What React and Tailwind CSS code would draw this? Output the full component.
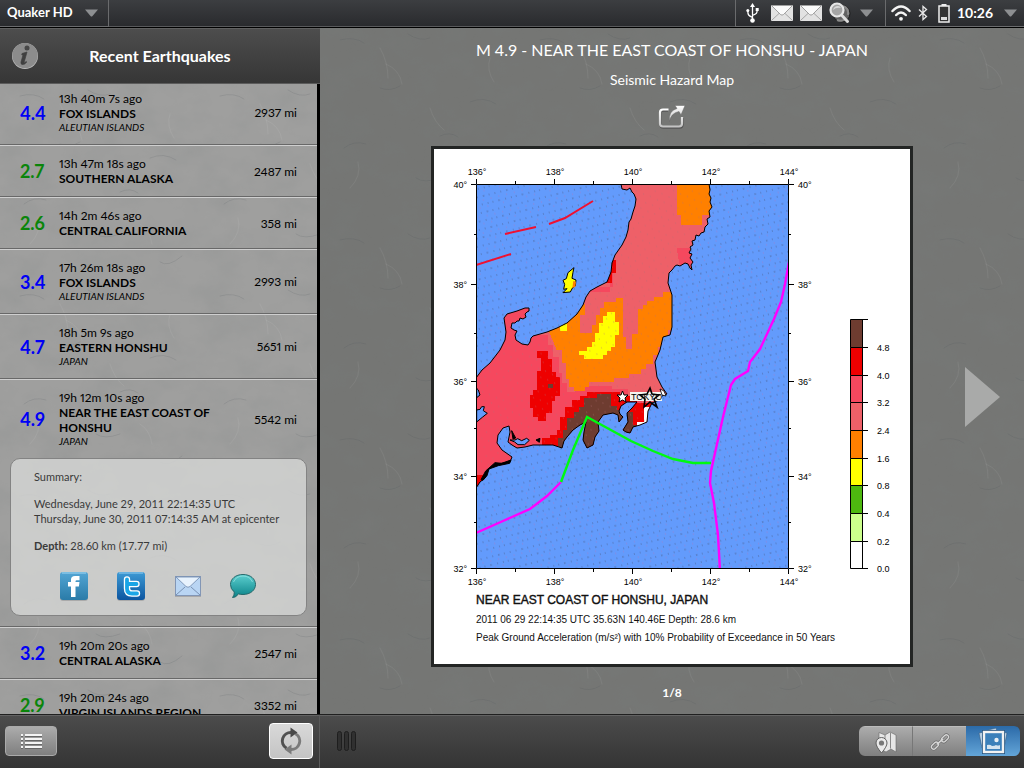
import React from "react";

const QUAKES = [
  { mag: "4.4", strong: true, ago: "13h 40m 7s ago", name: "FOX ISLANDS", region: "ALEUTIAN ISLANDS", dist: "2937 mi" },
  { mag: "2.7", ago: "13h 47m 18s ago", name: "SOUTHERN ALASKA", dist: "2487 mi" },
  { mag: "2.6", ago: "14h 2m 46s ago", name: "CENTRAL CALIFORNIA", dist: "358 mi" },
  { mag: "3.4", strong: true, ago: "17h 26m 18s ago", name: "FOX ISLANDS", region: "ALEUTIAN ISLANDS", dist: "2993 mi" },
  { mag: "4.7", strong: true, ago: "18h 5m 9s ago", name: "EASTERN HONSHU", region: "JAPAN", dist: "5651 mi" },
  { mag: "4.9", strong: true, ago: "19h 12m 10s ago", name: "NEAR THE EAST COAST OF HONSHU", region: "JAPAN", dist: "5542 mi", open: true },
  { mag: "3.2", strong: true, ago: "19h 20m 20s ago", name: "CENTRAL ALASKA", dist: "2547 mi" },
  { mag: "2.9", ago: "19h 20m 24s ago", name: "VIRGIN ISLANDS REGION", dist: "3352 mi" },
];

/* Marble surface that lies behind the list and the map */
function Marble({ id }) {
  return (
    <svg className="absolute inset-0 h-full w-full" aria-hidden="true">
      <defs>
        <filter id={id + "n"} x="0" y="0" width="100%" height="100%">
          <feTurbulence type="fractalNoise" baseFrequency="0.025 0.035" numOctaves="4" seed="7" stitchTiles="stitch" />
          <feColorMatrix values="0 0 0 0 0.2  0 0 0 0 0.22  0 0 0 0 0.22  0.9 0 0 0 -0.35" />
        </filter>
        <pattern id={id + "v"} width="200" height="200" patternUnits="userSpaceOnUse">
          <g fill="none" strokeLinecap="round">
            <path d="M20 12q14-4 24 3M88 6q12 8 22 4M150 74q14-6 26 2M24 120q10-8 22-4M96 150q8 6 24 0M160 178q8 6 22-6M60 60q10 4 20-2M120 108q10-5 18 1" stroke="#3f4a4c" strokeOpacity=".14" />
            <path d="M60 20q8 14 8 30M66 36q14 6 16 20M110 80q4 14 14 22M30 160q12-12 8-26M170 30q-4 12 4 24M140 140q10 6 12 20" stroke="#fff" strokeOpacity=".06" />
          </g>
        </pattern>
      </defs>
      <rect width="100%" height="100%" filter={"url(#" + id + "n)"} opacity=".4" />
      <rect width="100%" height="100%" fill={"url(#" + id + "v)"} />
    </svg>
  );
}

function Caret() {
  return (
    <svg width="13" height="8" viewBox="0 0 13 8" aria-hidden="true">
      <path d="M0 .5h13L7.5 7q-1 1-2 0z" fill="#8d8f91" />
    </svg>
  );
}

function Mail() {
  return (
    <svg width="22" height="16" viewBox="0 0 22 16" role="img" aria-label="New mail">
      <rect width="22" height="16" rx="1" fill="#e2e2e2" />
      <path d="M1 15l7.500-7M21 15l-7.500-7" stroke="#a5a5a5" />
      <path d="M.5.5h21L12.500 9.500q-1.500 1.200-3 0z" fill="#fafafa" stroke="#8b8b8b" strokeWidth=".8" />
    </svg>
  );
}

function StatusBar() {
  return (
    <header className="flex h-7 shrink-0 items-stretch border-b border-black bg-linear-to-b from-[#3c3e41] to-[#292a2d] text-white">
      <button className="flex w-[109px] items-center justify-between border-r border-b border-[#6a6b6d] pr-2.5 pl-[7px] text-[13px] font-bold">
        Quaker HD <Caret />
      </button>
      <div className="flex-1 border-b border-[#58595b]" />
      <div className="flex w-[150px] items-center border-b border-l border-[#6a6b6d] pl-2.5">
        <svg width="13" height="20" viewBox="0 0 13 20" role="img" aria-label="USB">
          <path d="M6.500 3v14M6.500 14.500C2.500 12.500 1.800 12 1.800 8M6.500 12.500c4-1.500 4.700-2 4.700-6" fill="none" stroke="#fff" strokeWidth="1.300" />
          <path d="M6.500 0L9 4H4z" fill="#fff" />
          <circle cx="6.500" cy="17.500" r="2.300" fill="#fff" />
          <circle cx="1.800" cy="7.500" r="1.500" fill="#fff" />
          <path d="M9.700 5h3v3h-3z" fill="#fff" />
        </svg>
        <div className="ml-3 flex gap-[7px]"><Mail /><Mail /></div>
        <svg className="ml-[7px]" width="22" height="22" viewBox="0 0 22 22" role="img" aria-label="Search">
          <circle cx="12.500" cy="11.500" r="8.500" fill="#626262" stroke="#1c1c1c" />
          <path d="M14 4q6 2 5 9M8 18q5 2 8-1" fill="none" stroke="#8a8a8a" strokeWidth="2" />
          <path d="M12.500 13l6 6.500" stroke="#ddd" strokeWidth="3" strokeLinecap="round" />
          <circle cx="8" cy="8" r="6.500" fill="#a5a5a5" stroke="#e6e6e6" strokeWidth="2.200" />
          <path d="M4 8q1-4 5-4 2 0 3 2-5-1-8 2z" fill="#d8d8d8" />
        </svg>
        <span className="ml-[9px]"><Caret /></span>
      </div>
      <button aria-label="System menu" className="flex w-[139px] items-center border-b border-l border-[#6a6b6d] pl-[5px] text-sm font-bold">
        <svg width="20" height="16" viewBox="0 0 20 16" aria-hidden="true">
          <g fill="none" stroke="#f4f4f4" strokeWidth="2.500" strokeLinecap="round">
            <path d="M1.500 6q8.500-9 17 0" /><path d="M5.200 10q4.800-5 9.600 0" />
          </g>
          <circle cx="10" cy="13.800" r="1.900" fill="#f4f4f4" />
        </svg>
        <svg className="ml-[7px]" width="10" height="16" viewBox="0 0 10 16" aria-hidden="true">
          <path d="M1 4.500l7.500 7L5 14.500v-13l3.500 3-7.500 7" fill="none" stroke="#e8e8e8" strokeWidth="1.300" />
        </svg>
        <svg className="ml-2.5" width="12" height="19" viewBox="0 0 12 19" aria-hidden="true">
          <path d="M3.500 0h5v2h-5z" fill="#eee" />
          <rect x="1" y="2" width="10" height="16" fill="#333" stroke="#eee" strokeWidth="1.500" />
          <path d="M3 13h6v3H3z" fill="#ddd" />
        </svg>
        <span className="ml-[7px] flex-1 text-left">10:26</span>
        <span className="mr-[7px]"><Caret /></span>
      </button>
    </header>
  );
}

function Summary() {
  return (
    <section className="relative mx-2.5 mb-2.5 rounded-[10px] border border-[#838383] bg-[#d2d3d2]/85 px-[23px] pt-2.5 pb-3.5 text-[11px] leading-[15px] text-[#3a3a3a]">
      <p>Summary:</p>
      <p className="mt-3">Wednesday, June 29, 2011 22:14:35 UTC</p>
      <p className="whitespace-nowrap">Thursday, June 30, 2011 07:14:35 AM at epicenter</p>
      <p className="mt-3"><b>Depth:</b> 28.60 km (17.77 mi)</p>
      <div className="mt-[18px] flex items-center justify-between pr-[26px] pl-[25px]">
        <button aria-label="Share on Facebook">
          <svg width="30" height="30" viewBox="0 0 30 30">
            <defs><linearGradient id="fb" x2="0" y2="1"><stop stopColor="#53a5d4" /><stop offset="1" stopColor="#2a7ba8" /></linearGradient></defs>
            <rect x="1" y="2" width="28" height="28" rx="3" fill="#aaa" />
            <rect x="1" y="1" width="28" height="28" rx="3" fill="url(#fb)" />
            <path d="M3 2h24" stroke="#a5d8f2" />
            <path d="M12 26V15.500H9V11h3V8.500Q12 5 16 5h4.500v4.300h-2.800q-1.200 0-1.200 1.200v.5h4l-.6 4.500h-3.400V26z" fill="#fff" />
          </svg>
        </button>
        <button aria-label="Share on Twitter">
          <svg width="30" height="30" viewBox="0 0 30 30">
            <defs><linearGradient id="tw" x2="0" y2="1"><stop stopColor="#3d9ad4" /><stop offset="1" stopColor="#0c55a0" /></linearGradient></defs>
            <rect x="1" y="2" width="28" height="28" rx="3" fill="#aaa" />
            <rect x="1" y="1" width="28" height="28" rx="3" fill="url(#tw)" />
            <path d="M3 2h24" stroke="#95cdf0" />
            <path d="M11 8.500v9q0 5 5 5h5M11 13h9.500" fill="none" stroke="#fff" strokeWidth="6.400" strokeLinecap="round" />
            <path d="M11 8.500v9q0 5 5 5h5M11 13h9.500" fill="none" stroke="#1aa5e6" strokeWidth="3.800" strokeLinecap="round" />
          </svg>
        </button>
        <button aria-label="Share by mail">
          <svg width="28" height="22" viewBox="0 0 28 22">
            <path d="M1 21.500h26" stroke="#a9a9a9" />
            <rect x="1.500" y="1.500" width="25" height="19" fill="#b9d5f3" stroke="#8296b5" />
            <path d="M2 20l9-8M26 20l-9-8" stroke="#7992b4" />
            <path d="M2 2h24l-10 9.500q-2 1.500-4 0z" fill="#e7f2fd" stroke="#7992b4" strokeWidth=".9" />
          </svg>
        </button>
        <button aria-label="Share by message">
          <svg width="28" height="26" viewBox="0 0 28 26">
            <defs><linearGradient id="ms" x2="0" y2="1"><stop stopColor="#5ccfcf" /><stop offset="1" stopColor="#0b8288" /></linearGradient></defs>
            <path d="M14 1.500c7.500 0 12.500 4.500 12.500 10S21.500 21.500 14 21.500q-2.500 0-4.500-.6Q7 24.500 3.500 24.500q2-2 1.800-5.500Q1.500 16 1.500 11.500c0-5.500 5-10 12.500-10z" fill="url(#ms)" stroke="#27686b" />
            <path d="M4.500 9Q7 3 14 3t9.500 6" fill="none" stroke="#9fe6e4" strokeOpacity=".7" />
          </svg>
        </button>
      </div>
    </section>
  );
}

function QuakeRow({ q }) {
  return (
    <li className="border-t border-b border-t-[#cfcfcf] border-b-[#686868]">
      <button className="grid w-full grid-cols-[39px_158px_1fr] items-center py-2.5 pr-5 pl-5 text-left text-xs leading-[15px] proportional-nums">
        <span className={q.strong ? "text-lg leading-none font-bold text-[#0000f5]" : "text-lg leading-none font-bold text-[#0a850a]"}>{q.mag}</span>
        <span className="block">
          <span className="block">{q.ago}</span>
          <b className="block">{q.name}</b>
          {q.region && <i className="block text-[10px] leading-[13px]">{q.region}</i>}
        </span>
        <span className="text-right">{q.dist}</span>
      </button>
      {q.open && <Summary />}
    </li>
  );
}

function Sidebar() {
  return (
    <aside className="flex w-80 shrink-0 flex-col border-black">
      <div className="grid h-14 shrink-0 grid-cols-[26px_1fr_26px] items-center border-t border-b border-t-[#606060] border-b-[#5c5c5c] bg-linear-to-b from-[#4d4d4d] to-[#363636] px-3">
        <button aria-label="About">
          <svg width="27" height="28" viewBox="0 0 27 28">
            <circle cx="13" cy="14" r="13" fill="#b9b9b9" />
            <circle cx="13" cy="13.500" r="12.600" fill="#8c8c8c" />
            <circle cx="15" cy="6" r="2.500" fill="#474747" />
            <path d="M10 11.500l5-1.500-2.800 10q-.3 1.500 2-.5l.6.600q-2.500 3-4.800 2.400-1.500-.5-1-2.500l2-7-1.300-.3z" fill="#404040" stroke="#404040" strokeWidth=".7" />
          </svg>
        </button>
        <h1 className="text-center text-base font-bold text-white">Recent Earthquakes</h1>
      </div>
      <div className="relative min-h-0 flex-1 overflow-hidden border-r-3 border-black bg-[#9f9f9e]">
        <Marble id="left" />
        <ul className="relative -mt-1">
          {QUAKES.map((q) => <QuakeRow key={q.ago} q={q} />)}
        </ul>
      </div>
    </aside>
  );
}

const LAND =
  "M621 184L622 189L627 190L630 188L632 192L634 194L636 199L635 206L633 212L631 219L629 222L628 230L626 237L622 245L615 255L612 263L611 272L607 282L597 287L590 291L586 297L583 305L577 314L567 323L557 328L547 332L533 336L531 338L530 342L528 345L522 344L516 340L515 335L517 331L514 330L511 328L512 323L515 323L517 321L519 321L520 318L523 319L526 317L525 314L527 312L529 311L529 308L525 308L517 311L507 314L504 318L505 325L506 332L505 340L500 350L490 363L482 370L476 378V488L480 482L485 478L487 470L497 464L510 462L512 457L502 450L497 443L498 435L503 428L509 426L510 432L508 442L512 445L517 448L525 447L533 445L545 445L553 445L562 448L564 441L567 437L573 430L580 425L586 422L584 432L583 440L587 448L593 445L595 437L599 431L598 422L603 415L613 413L618 415L619 422L623 417L620 414L619 411L621 406L627 402L637 402L632 408L627 413L628 422L623 430L626 432L630 433L633 427L640 425L647 422L648 411L652 403L659 400L662 396L667 394L662 387L657 377L655 362L660 350L663 337L670 335L672 327V295L668 283L669 273L672 270L675 266L677 265L680 266L685 263L688 264L690 268L692 270L691 265L693 262L690 258L692 254L689 253L691 249L690 247L693 245L692 241L695 240L696 235L699 236L701 233L704 232L705 227L708 224L707 219L710 217L709 211L712 207L710 202L711 198L709 194L710 190L709 184z";

const X_TICKS = [[476, "136°"], [554, "138°"], [632, "140°"], [710, "142°"], [788, "144°"]];
const Y_TICKS = [[184, "40°"], [284, "38°"], [381, "36°"], [476, "34°"], [568, "32°"]];
const SCALE = [
  [319, 28, "#6e3c30", ""], [347, 28, "#ee0000", "4.8"], [375, 27, "#f5485e", "4.0"], [402, 28, "#ee6068", "3.2"],
  [430, 28, "#ff8000", "2.4"], [458, 27, "#ffff00", "1.6"], [485, 28, "#4db80f", "0.8"], [513, 28, "#ccff8c", "0.4"], [541, 27, "#ffffff", "0.2"],
];

function HazardMap() {
  return (
    <svg viewBox="434 149 476 515" className="block h-auto w-full" role="img" aria-label="Seismic hazard map near the east coast of Honshu">
      <defs>
        <clipPath id="land"><path d={LAND} /></clipPath>
        <clipPath id="frame"><path d="M476 184h313v385H476z" /></clipPath>
        <pattern id="sea" width="24" height="16" patternUnits="userSpaceOnUse" patternTransform="rotate(-14)">
          <path d="M1 3h1M7 3h1M13 3h1.500M19 3h1M3 11h1.500M10 11h1M16 11h1M21 11h1" stroke="#46577f" strokeOpacity=".75" />
          <path d="M4 7h1M12 7h1M20 7h1M7 14h1M15 14h1" stroke="#b077c0" strokeOpacity=".7" />
        </pattern>
        <pattern id="soil" width="12" height="9" patternUnits="userSpaceOnUse" patternTransform="rotate(-14)">
          <path d="M1 2h1M7 6h1" stroke="#b16c73" strokeOpacity=".55" />
        </pattern>
      </defs>
      <path d="M434 149h476v515H434z" fill="#fff" />
      <path d="M476 184h313v385H476z" fill="#639bfc" />
      <path d="M476 184h313v385H476z" fill="url(#sea)" />

      <g clipPath="url(#land)">
        <path d="M476 184h313v385H476z" fill="#ee6068" />
        <g transform="translate(430 145) scale(.3333)" shapeRendering="crispEdges">
          <path d="M130 470h180v100h45v30h15v35h17v50h8v30h15v25h25v-8h20v-10h90v10h50v20h40v300H130z" fill="#f5485e" />
          <path d="M520 425h20v-60h10v60h-10v15h-60v-15z" fill="#f5485e" />
          <path d="M543 345h14v40h-12v30h-25v-15h15z" fill="#ee0000" />
          <path d="M740 310h60v55h-50z" fill="#f5485e" />
          <path d="M355 555l40-25 40-30 30-25v35h-15v55h35v-25h12v-30h13v-20h12v-20h35v-12h21v117h10v37h17v-45h20v-75h15v-12h12v-12h20v-12h28v-15h35v40l5 20v30h-10v25h-15v25h-20v25h-12v25h-15v25h-20v15h-15v15h-35v14h-45v12h-75v13h-12v13h-35v-13h-15v-22h-9v-48h-12v-40h-15z" fill="#ff8000" />
          <path d="M390 538l23-18v12h-1v25h-22zM532 500h23v30h12v40h-12v35h-12v13h-13v13h-10v12h-58v-13h-14v-13h24v-12h13v-15h10v-25h13v-30h12v-22h12z" fill="#ff0" />
          <path d="M742 119h105v90h-30v31h-64v-30h-11z" fill="#ff8000" />
          <path d="M322 617h33v25h12v38h12v15h11v58h-15v14h-8v38h-20v22h-22v-10h-15v-28h-10v-38h10v-15h12v-58h12v-38h-12z" fill="#ee0000" />
          <path d="M355 718h14v10h-14z" fill="#6e3c30" />
          <path d="M130 990h40v120h-40zM335 890v-10h25v-10h20v-15h10v-40h15v-30h20v-20h25v-12h20v-12h100v12h50v20h100v100l-250 80H350z" fill="#ee0000" />
          <path d="M385 880h15v-25h12v-35h20v-20h15v-15h15v-25h40v-12h40v35h20v12h30v160H385zM575 800h35v40h15v35l-60 20z" fill="#6e3c30" />
          <path d="M610 855h12v-25h20v-45h25v80h-50z" fill="#fff" />
        </g>
        <path d="M476 184h313v385H476z" fill="url(#soil)" />
      </g>
      <path d={LAND} fill="none" stroke="#000" strokeLinejoin="round" clipPath="url(#frame)" />
      <g transform="translate(430 145) scale(.3333)" stroke="#000" strokeWidth="3">
        <path d="M432 368l-18 15-5 18-10 5 5 12-3 15 10-2-12 12 22-2 7-13 8-5 2-18-12-5 3-18z" fill="#ff0" />
        <path d="M430 408l8 2-2 15-9 4z" fill="#ff8000" stroke="none" />
      </g>
      <g transform="translate(430 360) scale(.3333)" stroke="#000" strokeWidth="3" fill="#639bfc">
        <path d="M140 85l5 5 5 15-10 8zM140 150l10-2 5-8 8 0-3 12 12 8-15 12-17 14z" />
        <path d="M240 240l15 0 8-4 12 6 15-7 8 6-14 13-20 0-10-8z" />
        <path d="M245 212l12 22-8 3zM318 240l12-5-2 12z" fill="#000" />
        <path d="M195 308l20 2 28-10-4 10-34 7-28 10-6 20-12 14-6-2 14-26z" fill="#000" />
      </g>

      <g clipPath="url(#frame)" fill="none" strokeWidth="2">
        <path d="M476 265l35-11M505 234l31-7M549 224l16-6 28-17" stroke="#f01030" />
        <path d="M476 533l27-12 27-12 17-13 14-14M789 262l-4 22-4 18-7 17-14 30-10 13-2 9-13 8-4 6-8 32-12 54-1 12 4 20 4 32 2 36" stroke="#f0f" strokeWidth="2.400" />
        <path d="M561 482l12-32 14-33 11 6 33 18 22 10 20 8 20 4h18" stroke="#00fa10" strokeWidth="2.400" />
      </g>

      <path d="M630 392h32v9h-32z" fill="#f5f5ef" />
      <path d="M660 389l2 6 4 1-2-5z" fill="#fff" stroke="#000" strokeWidth=".8" />
      <text x="631" y="400" className="font-['Liberation_Sans'] text-[9px]">TOKYO</text>
      <path d="M650 388l2 6 7 1-5 4 3 8-7-5-6 5 1-8-5-4 7-1z" fill="none" stroke="#000" strokeWidth="1.600" />
      <path d="M622.500 391l1.500 4 4 0-3 3 1 4-3.500-2-3.500 2 1-4-3-3 4 0z" fill="#fff" stroke="#000" />

      <g stroke="#000" fill="none">
        <path d="M476.500 184.500h312v384h-312z" />
        <path d="M476.500 179v5M554.500 179v5M632.500 179v5M710.500 179v5M788.500 179v5M476.500 569v5M554.500 569v5M632.500 569v5M710.500 569v5M788.500 569v5" />
        <path d="M515.500 181v3M593.500 181v3M671.500 181v3M749.500 181v3M515.500 569v3M593.500 569v3M671.500 569v3M749.500 569v3" />
        <path d="M471 184.500h5M471 284.500h5M471 381.500h5M471 476.500h5M471 568.500h5M789 184.500h5M789 284.500h5M789 381.500h5M789 476.500h5M789 568.500h5" />
        <path d="M474 234.500h2M474 333.500h2M474 428.500h2M474 522.500h2M789 234.500h2M789 333.500h2M789 428.500h2M789 522.500h2" />
      </g>
      <g className="font-['Liberation_Sans'] text-[9px]">
        {X_TICKS.map(([x, t]) => (
          <React.Fragment key={x}>
            <text x={x + 1} y="175" textAnchor="middle">{t}</text>
            <text x={x + 1} y="585" textAnchor="middle">{t}</text>
          </React.Fragment>
        ))}
        {Y_TICKS.map(([y, t]) => (
          <React.Fragment key={y}>
            <text x="467" y={y + 4} textAnchor="end">{t}</text>
            <text x="798" y={y + 4}>{t}</text>
          </React.Fragment>
        ))}
        {SCALE.map(([y, h, c, t]) => (
          <React.Fragment key={y}>
            <path d={"M850.500 " + (y + 0.5) + "h12v" + h + "h-12z"} fill={c} stroke="#000" />
            <path d={"M862 " + (y + 0.5) + "h6"} stroke="#000" />
            <text x="877" y={y + 4}>{t}</text>
          </React.Fragment>
        ))}
        <path d="M862 568.500h6" stroke="#000" />
        <text x="877" y="572">0.0</text>
      </g>
      <g className="font-['Liberation_Sans']" fill="#111">
        <text x="476" y="604" className="text-[12px]" stroke="#111" strokeWidth=".4">NEAR EAST COAST OF HONSHU, JAPAN</text>
        <text x="476" y="623" className="text-[10px]">2011 06 29 22:14:35 UTC 35.63N 140.46E Depth: 28.6 km</text>
        <text x="476" y="641" className="text-[10px]">Peak Ground Acceleration (m/s²) with 10% Probability of Exceedance in 50 Years</text>
      </g>
    </svg>
  );
}

function Viewer() {
  return (
    <main className="relative flex min-w-0 flex-1 flex-col overflow-hidden bg-[#757674] text-white">
      <Marble id="right" />
      <div className="relative flex flex-col items-center pt-2.5">
        <h2 className="text-base leading-6">M 4.9 - NEAR THE EAST COAST OF HONSHU - JAPAN</h2>
        <p className="mt-2 text-sm leading-5">Seismic Hazard Map</p>
        <button aria-label="Open map" className="mt-3.5">
          <svg width="28" height="26" viewBox="0 0 28 26">
            <defs><linearGradient id="op" x2="0" y2="1"><stop stopColor="#fff" /><stop offset="1" stopColor="#c4c4c4" /></linearGradient></defs>
            <path d="M10 6.500H5.500q-3 0-3 3v11q0 3 3 3h16q3 0 3-3V14" fill="none" stroke="#555" strokeWidth="2.400" />
            <path d="M10.500 5.500H5q-3 0-3 3v11q0 3 3 3h16q3 0 3-3V13" fill="none" stroke="url(#op)" strokeWidth="2.200" />
            <path d="M11.500 17.500Q10 7 19 4.500L17 1.500h10l-4 9.500-2-3.500Q13 9 11.500 17.500z" fill="url(#op)" stroke="#666" strokeWidth=".5" />
          </svg>
        </button>
        <div className="mt-4 grid w-full grid-cols-[1fr_minmax(0,482px)_1fr] items-center">
          <figure className="col-start-2 border-3 border-[#232524] bg-white"><HazardMap /></figure>
          <button aria-label="Next image" className="mr-6 -mt-5 justify-self-end">
            <svg width="35" height="60" viewBox="0 0 35 60"><path d="M0 0l35 30L0 60z" fill="#a9aaa9" /></svg>
          </button>
        </div>
        <p className="mt-4 text-xs leading-5 font-bold">1/8</p>
      </div>
    </main>
  );
}

function Toolbar() {
  return (
    <footer className="flex h-[54px] shrink-0 border-t border-[#202020] bg-linear-to-b from-[#4c4c4c] to-[#343434]">
      <div className="flex w-80 items-center justify-between border-t border-r border-t-[#626262] border-r-[#5a5a5a] pr-1.5 pb-0.5 pl-[5px]">
        <button aria-label="List" className="flex h-[30px] w-[52px] items-center justify-center rounded-sm border border-[#aaa] bg-linear-to-b from-[#acacac] to-[#7f7f7f]">
          <svg width="21" height="17" viewBox="0 0 21 17" shapeRendering="crispEdges">
            <path d="M0 3h2M0 7h2M0 11h2M0 15h2M4 3h17M4 7h17M4 11h17M4 15h17" stroke="#666" strokeWidth="2" />
            <path d="M0 2h2M0 6h2M0 10h2M0 14h2M4 2h17M4 6h17M4 10h17M4 14h17" stroke="#f4f4f4" strokeWidth="2" />
          </svg>
        </button>
        <button aria-label="Refresh" className="flex h-9 w-11 items-center justify-center rounded-sm border border-white bg-linear-to-b from-[#d9d9d9] to-[#c4c4c4]">
          <svg width="22" height="28" viewBox="0 0 22 28">
            <path d="M6.500 21.300A8.500 8.500 0 0 1 11.500 5.500" fill="none" stroke="#505050" strokeWidth="3" />
            <path d="M15.500 6.700A8.500 8.500 0 0 1 10.500 22.500" fill="none" stroke="#7a7a7a" strokeWidth="3" />
            <path d="M10.500.5l7 5-7 5z" fill="#484848" />
            <path d="M11.500 27.500l-7-5 7-5z" fill="#7a7a7a" />
          </svg>
        </button>
      </div>
      <div className="flex flex-1 items-center justify-between border-t border-[#626262] pr-1 pb-0.5 pl-[17px]">
        <button aria-label="Resize panel" className="flex gap-0.5">
          <span className="h-5 w-[5px] rounded-sm border border-[#1e1e1e] bg-[#303030]" />
          <span className="h-5 w-[5px] rounded-sm border border-[#1e1e1e] bg-[#303030]" />
          <span className="h-5 w-[5px] rounded-sm border border-[#1e1e1e] bg-[#303030]" />
        </button>
        <div className="flex h-[30px] overflow-hidden rounded-md">
          <button aria-label="Map" className="flex w-[54px] items-center justify-center border-t border-r border-t-[#bbb] border-r-[#777] bg-linear-to-b from-[#acacac] to-[#7f7f7f]">
            <svg width="24" height="24" viewBox="0 0 24 24">
              <path d="M5 2.500l6 2.500 5-3 6 3v17l-5-3-5 3-7-4z" fill="#e6e6e6" stroke="#666" strokeWidth=".6" />
              <path d="M11 5v7M16.500 2.500v16" stroke="#888" />
              <path d="M7.500 23Q2 16.500 2 13a5.500 5.500 0 0111 0q0 3.500-5.500 10z" fill="#e9e9e9" stroke="#606060" />
              <circle cx="7.500" cy="13" r="2.600" fill="#777" />
            </svg>
          </button>
          <button aria-label="Link" className="flex w-[53px] items-center justify-center border-t border-[#bbb] bg-linear-to-b from-[#acacac] to-[#7f7f7f]">
            <svg width="20" height="20" viewBox="0 0 22 22">
              <g fill="none" stroke="#6a6a6a" strokeWidth="2.800">
                <rect x="1" y="12.500" width="9" height="5" rx="2.500" transform="rotate(-45 5.500 15)" />
                <rect x="12" y="4.500" width="9" height="5" rx="2.500" transform="rotate(-45 16.500 7)" />
              </g>
              <path d="M7.500 13.500l7-6" stroke="#6a6a6a" strokeWidth="3" />
              <g fill="none" stroke="#d6d6d6" strokeWidth="1.500">
                <rect x="1" y="12.500" width="9" height="5" rx="2.500" transform="rotate(-45 5.500 15)" />
                <rect x="12" y="4.500" width="9" height="5" rx="2.500" transform="rotate(-45 16.500 7)" />
                <path d="M7.500 13.500l7-6" strokeWidth="1.800" />
              </g>
            </svg>
          </button>
          <button aria-label="Images" aria-pressed="true" className="flex w-[54px] items-center justify-center bg-linear-to-b from-[#2b6aa8] to-[#63a5d8]">
            <svg width="30" height="26" viewBox="0 0 30 26">
              <path d="M1 5l5-1 2 15-4 1zM29 5l-5-1-2 15 4 1zM10 2l8-2 1 3h-9z" fill="#b9cfe2" stroke="#335d85" strokeWidth=".6" />
              <rect x="6" y="4" width="19" height="20" fill="#3c80ba" stroke="#24527e" strokeWidth="4" />
              <rect x="6" y="4" width="19" height="20" fill="#3c80ba" stroke="#f2f2f2" strokeWidth="2.400" />
              <circle cx="18.500" cy="12" r="2.200" fill="#e8eef4" />
              <path d="M9 21v-4q3-1 5 1 3 0 4-1 2 1 4 0v4z" fill="#d5e4f0" />
            </svg>
          </button>
        </div>
      </div>
    </footer>
  );
}

export default function App() {
  return (
    <div className="flex h-screen flex-col overflow-hidden bg-black font-['Lato',sans-serif] text-black">
      <StatusBar />
      <div className="flex min-h-0 flex-1">
        <Sidebar />
        <Viewer />
      </div>
      <Toolbar />
    </div>
  );
}
